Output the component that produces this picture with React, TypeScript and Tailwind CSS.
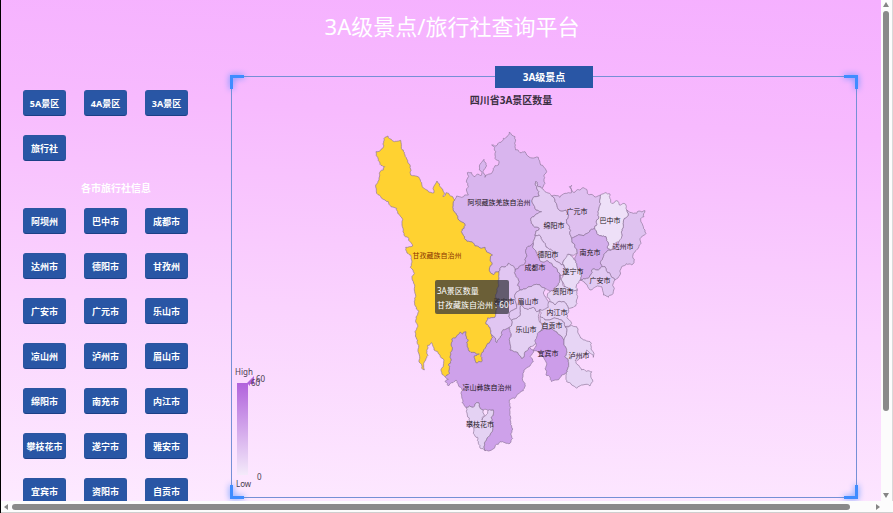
import React from 'react';

type Point = [number, number];

interface Region {
  name: string;
  label: Point;
  fill: string;
  outline: string;
  active?: boolean;
}

const spots = ['5A景区', '4A景区', '3A景区', '旅行社'];

const cities = [
  '阿坝州', '巴中市', '成都市',
  '达州市', '德阳市', '甘孜州',
  '广安市', '广元市', '乐山市',
  '凉山州', '泸州市', '眉山市',
  '绵阳市', '南充市', '内江市',
  '攀枝花市', '遂宁市', '雅安市',
  '宜宾市', '资阳市', '自贡市',
];

// Outlines use a grid three times finer than the chart's own units.
const regions: Region[] = [
  {
    name: '阿坝藏族羌族自治州', label: [499, 203], fill: '#d9b5ee',
    outline:
      '284,240 290,228 305,232 325,225 325,200 320,180 322,158 335,158 345,170 352,162 362,168 366,158 358,150 364,128 372,118 378,130 376,145 370,158 375,172 385,162 395,160 400,145 415,135 416,122 405,115 407,95 395,75 412,75 430,55 448,36 465,50 467,90 480,98 495,95 500,105 535,112 542,135 558,150 552,165 555,190 545,205 528,184 530,205 538,228 520,232 518,250 528,270 545,275 525,285 512,300 520,318 538,325 525,345 520,370 500,385 495,430 475,445 465,450 445,430 420,445 417,455 400,465 388,452 395,435 390,420 397,405 385,398 375,382 345,378 330,365 315,358 304,335 312,325 310,308 300,303 290,285 278,262',
  },
  {
    name: '凉山彝族自治州', label: [487, 388], fill: '#cea1ea',
    outline:
      '318,635 325,660 326,692 358,702 343,708 348,728 365,725 370,695 380,675 393,660 395,645 410,668 425,635 448,622 455,640 453,650 450,690 468,695 485,715 495,695 510,680 520,690 510,710 520,725 510,738 492,750 495,790 465,835 448,840 450,900 458,955 450,970 420,965 395,990 375,992 385,950 398,915 400,870 370,870 356,848 340,862 318,862 305,830 295,795 288,780 275,788 265,798 255,785 265,778 255,770 268,760 265,735 272,705 275,680 275,657 288,652 300,636 308,642',
  },
  {
    name: '甘孜藏族自治州', label: [437, 256], fill: '#ffd231', active: true,
    outline:
      '68,72 72,55 84,48 97,62 122,61 124,85 133,97 145,130 152,165 182,185 187,200 222,218 224,195 231,183 244,203 249,230 258,218 266,220 284,240 278,262 290,285 300,303 310,308 312,325 304,335 315,358 330,365 345,378 375,382 385,398 397,405 390,420 395,435 388,452 400,465 417,455 415,490 410,520 412,540 405,592 383,594 378,612 390,622 395,645 393,660 380,675 370,695 365,725 348,728 343,708 358,702 326,692 325,660 318,635 308,642 300,636 288,652 275,657 275,680 272,705 265,735 268,760 255,770 243,752 250,740 240,705 222,690 215,668 200,690 197,720 193,750 185,745 178,705 173,660 170,610 165,540 163,460 155,420 140,395 137,382 158,378 150,365 130,330 122,290 110,265 85,245 65,235 50,220 47,195 57,180 60,155 74,140 55,118 48,95 68,85',
  },
  {
    name: '绵阳市', label: [554, 226], fill: '#e3cbf2',
    outline:
      '528,184 545,205 575,228 585,245 595,268 618,270 625,290 620,310 635,355 645,375 652,400 635,405 625,402 612,420 615,445 590,425 575,390 555,370 538,345 525,345 538,325 520,318 512,300 525,285 545,275 528,270 518,250 520,232 538,228 530,205',
  },
  {
    name: '广元市', label: [577, 212], fill: '#dfc0f0',
    outline:
      '575,228 600,232 635,218 628,200 635,196 642,218 665,205 680,208 682,220 710,230 722,225 718,260 710,300 704,325 682,340 660,345 635,355 620,310 625,290 618,270 595,268 585,245',
  },
  {
    name: '达州市', label: [623, 247], fill: '#dfc2f0',
    outline:
      '800,270 820,280 855,272 852,290 842,300 850,320 858,340 840,360 835,385 820,400 815,435 785,440 780,465 765,480 750,460 735,440 725,440 730,410 745,390 752,390 785,350 790,315 802,290',
  },
  {
    name: '巴中市', label: [610, 221], fill: '#eee0f8',
    outline:
      '722,225 738,218 750,222 755,250 770,242 778,255 792,250 800,270 802,290 790,315 785,350 760,375 752,390 742,380 738,350 710,340 704,325 710,300 718,260',
  },
  {
    name: '南充市', label: [590, 253], fill: '#d4aeec',
    outline:
      '635,355 660,345 682,340 704,325 710,340 738,350 742,380 752,390 745,390 730,410 725,440 710,450 695,450 680,475 660,480 658,450 645,420 652,400 645,375',
  },
  {
    name: '广安市', label: [600, 281], fill: '#e1c8f2',
    outline:
      '660,480 680,475 695,450 710,450 725,440 735,440 750,460 765,480 760,515 745,532 730,525 725,500 700,505 690,510 675,490',
  },
  {
    name: '德阳市', label: [548, 255], fill: '#e5cff4',
    outline:
      '525,345 538,345 555,370 575,390 590,425 615,445 610,465 600,465 590,445 575,430 545,425 530,400 520,370',
  },
  {
    name: '成都市', label: [535, 268], fill: '#d3aaec',
    outline:
      '520,370 530,400 545,425 575,430 590,445 600,465 595,495 570,515 555,505 520,495 500,505 480,510 475,480 465,450 475,445 495,430 500,385',
  },
  {
    name: '雅安市', label: [504, 302], fill: '#e1c6f2',
    outline:
      '417,455 420,445 445,430 465,450 475,480 480,510 465,540 470,565 450,575 450,595 455,600 448,622 425,635 410,668 395,645 390,622 378,612 383,594 405,592 412,540 410,520 415,490',
  },
  {
    name: '遂宁市', label: [573, 272], fill: '#e9dbf6',
    outline:
      '622,403 645,420 658,450 660,480 652,510 635,512 612,500 605,475 615,445 612,420',
  },
  {
    name: '乐山市', label: [526, 330], fill: '#e4d0f3',
    outline:
      '485,555 505,568 520,562 530,575 540,568 535,590 545,610 540,635 530,670 510,680 495,695 485,715 468,695 450,690 453,650 448,622 455,600 475,590',
  },
  {
    name: '眉山市', label: [528, 302], fill: '#e1c8f2',
    outline:
      '480,510 500,505 520,495 555,505 562,540 565,562 550,575 540,568 530,575 520,562 505,568 485,555 475,590 455,600 450,595 450,575 470,565 465,540',
  },
  {
    name: '资阳市', label: [563, 292], fill: '#e6d4f4',
    outline:
      '570,515 595,495 600,465 612,500 635,512 652,510 652,535 640,562 625,565 612,545 595,545 585,555 568,545 562,530',
  },
  {
    name: '内江市', label: [557, 313], fill: '#e5d1f4',
    outline:
      '568,545 585,555 595,545 612,545 625,565 628,600 635,610 615,620 605,600 580,595 555,600 540,590 540,568 565,562',
  },
  {
    name: '宜宾市', label: [548, 354], fill: '#cc9de9',
    outline:
      '540,635 555,625 580,630 600,645 612,660 615,710 625,725 622,755 605,765 590,780 575,785 558,765 560,730 552,715 540,698 520,692 528,670',
  },
  {
    name: '自贡市', label: [552, 326], fill: '#e4d0f3',
    outline:
      '540,590 555,600 580,595 605,600 615,620 620,645 612,660 600,645 580,630 555,625 540,635 545,610',
  },
  {
    name: '泸州市', label: [579, 356], fill: '#e7d5f5',
    outline:
      '615,620 630,618 650,620 658,645 670,660 690,665 695,690 700,712 680,690 660,715 645,720 655,735 665,750 695,755 698,780 690,798 665,795 650,805 635,795 620,785 622,755 625,725 615,710 612,660 620,645',
  },
  {
    name: '攀枝花市', label: [480, 425], fill: '#e4d2f3',
    outline:
      '318,862 340,862 356,848 370,870 366,900 376,888 385,870 400,870 398,915 385,950 375,992 355,970 353,952 340,940 338,920 330,905 322,885',
  },
];

const parse = (outline: string): Point[] =>
  outline.split(' ').map((pair) => pair.split(',').map(Number) as Point);

// The offset depends only on the two ends of an edge, so that two
// neighbouring regions get the same irregular border.
function split(a: Point, b: Point): Point[] {
  const dx = b[0] - a[0];
  const dy = b[1] - a[1];
  const length = Math.hypot(dx, dy);
  if (length < 7) return [a];
  const seed = Math.sin((a[0] + b[0]) * 12.9898 + (a[1] + b[1]) * 78.233) * 43758.5453;
  const side = dx > 0 || (dx === 0 && dy > 0) ? 1 : -1;
  const bend = (seed - Math.floor(seed) - 0.5) * 0.42 * side;
  const middle: Point = [
    Math.round((a[0] + b[0]) / 2 - dy * bend),
    Math.round((a[1] + b[1]) / 2 + dx * bend),
  ];
  return [...split(a, middle), ...split(middle, b)];
}

function coastline(outline: string): string {
  const points = parse(outline);
  return points
    .flatMap((point, i) => split(point, points[(i + 1) % points.length]))
    .map((point) => point.join(','))
    .join(' ');
}

function CityButton({ children }: { children: React.ReactNode }) {
  return (
    <button
      type="button"
      className="h-[26px] w-[43px] whitespace-nowrap rounded-[3px] border border-[#2b55a0] border-b-[#1b3f86] bg-[#2956a5] text-center text-[9px] font-bold leading-none text-white"
    >
      {children}
    </button>
  );
}

function Corner({ className }: { className: string }) {
  return (
    <span
      className={`pointer-events-none absolute size-[14px] border-[#3f8cff] drop-shadow-[0_0_3px_#4d8dff] ${className}`}
    />
  );
}

function SichuanMap() {
  return (
    <svg
      viewBox="232 108 624 389"
      className="min-h-0 w-full flex-1"
      role="img"
      aria-label="四川省3A景区数量"
    >
      <defs>
        <linearGradient id="scale" x1="0" y1="0" x2="0" y2="1">
          <stop offset="0" stopColor="#b163dc" />
          <stop offset="1" stopColor="#f4eafa" />
        </linearGradient>
      </defs>

      <g transform="translate(360 120) scale(0.33333)" stroke="#8d7599" strokeWidth="2" strokeLinejoin="round">
        {regions.map((region) => (
          <polygon key={region.name} points={coastline(region.outline)} fill={region.fill} />
        ))}
      </g>

      <g textAnchor="middle" className="text-[7px]">
        {regions.map((region) => (
          <text
            key={region.name}
            x={region.label[0]}
            y={region.label[1] + 2}
            fill={region.active ? '#8a3200' : '#1d1522'}
          >
            {region.name}
          </text>
        ))}
      </g>

      <rect x="237" y="383" width="11" height="92" fill="url(#scale)" />
      <path d="M247 383 L254 376 V384 L250 384 V386 Z" fill="#b163dc" />
      <g fill="#4a4050" className="text-[8px]">
        <text x="235" y="375">High</text>
        <text x="251" y="386">60</text>
        <text x="256" y="382">60</text>
        <text x="257" y="480">0</text>
        <text x="236" y="487">Low</text>
      </g>

      <rect x="435" y="280" width="74" height="34" rx="2" fill="#32323a" fillOpacity="0.72" />
      <g fill="#ffffff" className="text-[8px]">
        <text x="437" y="294">3A景区数量</text>
        <text x="437" y="308">甘孜藏族自治州 : 60</text>
      </g>
    </svg>
  );
}

function VerticalScrollbar() {
  return (
    <div className="flex w-3 shrink-0 flex-col items-center border-r border-[#d9d9d9] bg-[#fcfcfc] pr-px">
      <svg viewBox="0 0 6 5" className="mt-[2px] h-[5px] w-[6px] fill-[#858585]"><path d="M3 0 6 5H0Z" /></svg>
      <div className="mt-1 flex w-full flex-1 flex-col items-center">
        <div className="h-[83%] w-[6px] rounded-full bg-[#8a8a8a]" />
      </div>
      <svg viewBox="0 0 6 5" className="mb-[3px] h-[5px] w-[6px] fill-[#858585]"><path d="M0 0H6L3 5Z" /></svg>
    </div>
  );
}

function HorizontalScrollbar() {
  return (
    <div className="flex h-3 shrink-0 items-center border-b border-[#cfcfcf] bg-[#fcfcfc] pl-[3px] pr-[13px]">
      <svg viewBox="0 0 4 6" className="h-[6px] w-[4px] fill-[#858585]"><path d="M4 0V6L0 3Z" /></svg>
      <div className="ml-1 flex-1">
        <div className="h-[6px] w-[97%] rounded-full bg-[#8a8a8a]" />
      </div>
      <svg viewBox="0 0 4 6" className="h-[6px] w-[4px] fill-[#858585]"><path d="M0 0 4 3 0 6Z" /></svg>
    </div>
  );
}

export default function App() {
  return (
    <div className="flex h-screen flex-col overflow-hidden border-l border-black font-['Noto_Sans','Noto_Sans_CJK_SC',sans-serif]">
      <div className="flex min-h-0 flex-1">
        <div className="flex min-w-0 flex-1 flex-col overflow-hidden bg-[linear-gradient(183deg,#f5b0ff_0%,#f7bafe_25%,#fad3fe_62%,#fdeaff_100%)]">
          <header className="flex h-[76px] shrink-0 justify-center pl-[22px] pt-[10px]">
            <h1 className="text-[22px] leading-[32px] text-white">3A级景点/旅行社查询平台</h1>
          </header>

          <div className="flex min-h-0 flex-1">
            <aside className="w-[230px] shrink-0 overflow-hidden pt-[14px]">
              <nav className="grid grid-cols-[repeat(3,43px)] gap-x-[18px] gap-y-[19px] pl-[22px]">
                {spots.map((spot) => (
                  <CityButton key={spot}>{spot}</CityButton>
                ))}
              </nav>
              <h2 className="flex h-[47px] items-center justify-center pt-[6px] text-[10px] font-bold leading-none text-white">
                各市旅行社信息
              </h2>
              <nav className="grid grid-cols-[repeat(3,43px)] gap-x-[18px] gap-y-[19px] pl-[22px]">
                {cities.map((city) => (
                  <CityButton key={city}>{city}</CityButton>
                ))}
              </nav>
            </aside>

            <main className="relative mb-[3px] mr-6 flex min-w-0 flex-1 flex-col items-center border border-[#7590d6]">
              <Corner className="-left-[2px] -top-[2px] border-l-[3px] border-t-[3px]" />
              <Corner className="-right-[2px] -top-[2px] border-r-[3px] border-t-[3px]" />
              <Corner className="-bottom-[2px] -left-[2px] border-b-[3px] border-l-[3px]" />
              <Corner className="-bottom-[2px] -right-[2px] border-b-[3px] border-r-[3px]" />
              <h2 className="-mt-[11px] flex h-[22px] w-[98px] shrink-0 items-center justify-center bg-[#2956a5] text-[10px] font-bold leading-none text-white">
                3A级景点
              </h2>
              <h3 className="h-5 shrink-0 pr-[66px] pt-1 text-[10px] font-bold leading-4 text-[#3b2f42]">
                四川省3A景区数量
              </h3>
              <SichuanMap />
            </main>
          </div>
        </div>
        <VerticalScrollbar />
      </div>
      <HorizontalScrollbar />
    </div>
  );
}
